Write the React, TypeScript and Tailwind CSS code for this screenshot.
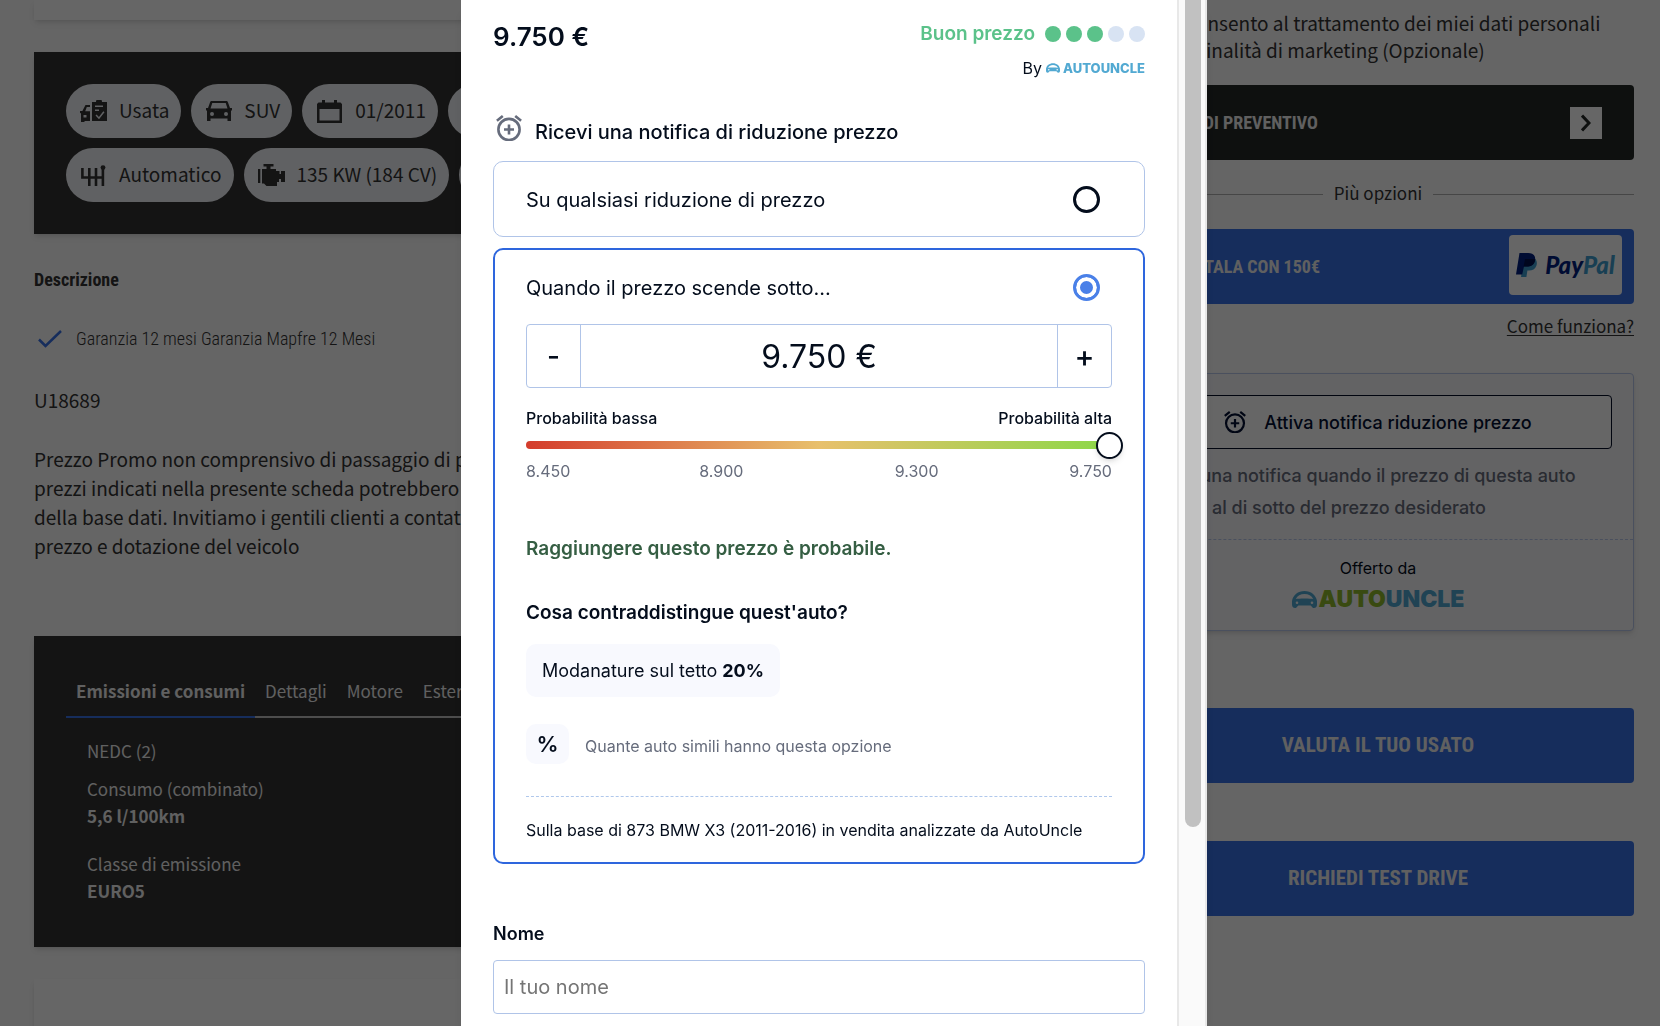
import { useState } from "react"
import type { ReactNode } from "react"

const MIN_PRICE = 8450
const MAX_PRICE = 9750
const STEP = 50

const formatPrice = (value: number) => `${Math.floor(value / 1000)}.${String(value % 1000).padStart(3, "0")}`

const sansFont = "font-['Noto_Sans_CJK_SC','Noto_Sans',sans-serif]"
const condensedFont = "font-['Roboto_Condensed','Liberation_Sans_Narrow',Roboto,sans-serif]"
const interFont = "font-['Inter',sans-serif]"

function AlarmAddIcon({ className }: { className: string }) {
  return (
    <svg viewBox="0 0 26 26" fill="none" stroke="currentColor" strokeWidth="2.6" className={className} aria-hidden="true">
      <circle cx="13" cy="14.5" r="10.6" />
      <path d="M13 9.5v10M8 14.5h10M.9 5.8L6.8 1M25.1 5.8L19.2 1" />
    </svg>
  )
}

function UsedIcon() {
  return (
    <svg viewBox="0 0 27 22" fill="currentColor" className="h-[22px] w-[27px]" aria-hidden="true">
      <path fillRule="evenodd" d="M12 2h4a3 3 0 0 1 6 0h5v19H12zM15 5.5V7h8V5.5zM15 9.5V11h4V9.5zM15.5 15.5l3.5 3.8 5.5-7-1.2-1-4.4 5.6-2.3-2.5z" />
      <path fillRule="evenodd" d="M5.5 5H10v2H6.8L5.2 11.2H10V21H4.5v1H1v-8.5L0 12.8V11h2.4zM3.5 15v2.5h3V15z" />
    </svg>
  )
}

function CarIcon() {
  return (
    <svg viewBox="0 0 26 20" fill="currentColor" className="h-5 w-[26px]" aria-hidden="true">
      <path
        fillRule="evenodd"
        d="M6 0h14c1 0 1.7.5 2 1.4L24 7h2v2.5h-1V20h-3.5v-2.5h-17V20H1V9.5H0V7h2l2-5.6C4.3.5 5 0 6 0zM6.3 2 4.5 7.5h17L19.7 2zM6 11a2 2 0 1 0 0 4 2 2 0 0 0 0-4zM20 11a2 2 0 1 0 0 4 2 2 0 0 0 0-4z"
      />
    </svg>
  )
}

function CalendarIcon() {
  return (
    <svg viewBox="0 0 25 23" fill="currentColor" className="h-[23px] w-[25px]" aria-hidden="true">
      <path fillRule="evenodd" d="M5 0h3v2.5h9V0h3v2.5h3.5L25 4v19H0V4l1.5-1.5H5zM2.5 9v11.5h20V9z" />
    </svg>
  )
}

function GearboxIcon() {
  return (
    <svg viewBox="0 0 25 21" fill="none" stroke="currentColor" strokeWidth="2.6" className="h-[21px] w-[25px]" aria-hidden="true">
      <path d="M1.4 3v9.5h20.5M8.3 3v18M15 3v18M21.9 3v18" />
      <circle cx="22" cy="2.6" r="2.4" fill="currentColor" stroke="none" />
    </svg>
  )
}

function EngineIcon() {
  return (
    <svg viewBox="0 0 27 22" fill="currentColor" className="h-[22px] w-[27px]" aria-hidden="true">
      <path d="M0 5h2.3v14H0zM5.5 0h10v2.5h-3V5H18v2h3.5v3H23V7h4v11h-4v-3h-2v3h-2v4H8.5L6 19.5H4V5h4.5V2.5h-3z" />
    </svg>
  )
}

function AutoUncleCar({ className }: { className: string }) {
  return (
    <svg viewBox="0 0 25 17" className={className} aria-hidden="true">
      <path
        fill="currentColor"
        fillRule="evenodd"
        d="M0 10C1 4 6 0 12.5 0S24 4 25 10v3.5c0 2-1 3.5-3 3.5-2.5 0-2-2.5-4-2.5H7C5 14.5 5.5 17 3 17c-2 0-3-1.5-3-3.5zM3.8 8C5.5 4.5 8.5 3 12.5 3s7 1.5 8.7 5c-2.500-.8-14.900-.8-17.400 0zM5 10.500a1.300 1.300 0 1 0 0 2.600 1.300 1.300 0 0 0 0-2.600zM20 10.500a1.300 1.300 0 1 0 0 2.600 1.300 1.300 0 0 0 0-2.600z"
      />
    </svg>
  )
}

function PayPalMark() {
  return (
    <svg viewBox="0 0 21 24" className="h-6 w-[21px]" aria-hidden="true">
      <path fill="#3f9fd0" d="M8 6h11.5c1.5 2 1.8 4.5.8 7-1.2 3-3.800 4.500-7.300 4.500h-1.600L10.400 24H5z" />
      <path fill="#001f80" d="M3.5 0h8.7C17 0 20 2.6 19 7.5c-1 4.500-4.200 6-8.500 6H8L6.200 21.500H0z" />
      <path fill="#00104d" d="M9 6h9.9c.3.5.3 1 .1 1.7-1 4.400-4.200 5.800-8.500 5.800H7.600z" />
    </svg>
  )
}

function Pill({ icon, label }: { icon: ReactNode; label: string }) {
  return (
    <li className="flex h-[54px] shrink-0 items-center gap-3 rounded-full bg-[#f0f2f7] pr-3 pl-[14px] text-[19px] leading-7 text-[#323232]">
      <span className="flex w-[27px] justify-center">{icon}</span>
      <span className="pb-[2px]">{label}</span>
    </li>
  )
}

function VehicleColumn() {
  const tabs = ["Dettagli", "Motore", "Esterni"]

  return (
    <div className={`min-w-0 flex-1 text-[#323232] ${sansFont}`}>
      <div className="h-5 bg-white shadow-md" />

      <section className="mt-8 bg-[#323232] p-8 shadow-md">
        <ul className="flex gap-[10px]">
          <Pill icon={<UsedIcon />} label="Usata" />
          <Pill icon={<CarIcon />} label="SUV" />
          <Pill icon={<CalendarIcon />} label="01/2011" />
          <li className="h-[54px] w-32 rounded-full bg-[#f0f2f7]" />
        </ul>
        <ul className="mt-[10px] flex gap-[10px]">
          <Pill icon={<GearboxIcon />} label="Automatico" />
          <Pill icon={<EngineIcon />} label="135 KW (184 CV)" />
          <li className="h-[54px] w-32 rounded-full bg-[#f0f2f7]" />
        </ul>
      </section>

      <h2 className={`mt-8 text-[18px] leading-7 font-bold ${condensedFont}`}>Descrizione</h2>
      <p className={`mt-[31px] flex items-center gap-[14px] text-[18px] leading-7 font-light ${condensedFont}`}>
        <svg viewBox="0 0 24 18" fill="none" stroke="#3770e6" strokeWidth="2.5" className="ml-1 h-[18px] w-6" aria-hidden="true">
          <path d="M1 9.5l6.5 6.5L23 1" />
        </svg>
        Garanzia 12 mesi Garanzia Mapfre 12 Mesi
      </p>
      <div className="mt-8 text-[19px] leading-[29px] whitespace-pre-line">
        <p>U18689</p>
        <p className="mt-[30px]">
          {"Prezzo Promo non comprensivo di passaggio di p\nprezzi indicati nella presente scheda potrebbero\ndella base dati. Invitiamo i gentili clienti a contat\nprezzo e dotazione del veicolo"}
        </p>
      </div>

      <section className="mt-[76px] bg-[#323232] px-8 pt-[42px] pb-[43px] text-[17px] leading-[26px] text-[#f0f0f0] shadow-md">
        <div role="tablist" className="flex items-start border-b-2 border-[#c0c0c0]">
          <button type="button" role="tab" aria-selected="true" className="-mb-[2px] border-b-2 border-[#3770e6] px-[10px] pb-3 font-bold">
            Emissioni e consumi
          </button>
          {tabs.map((tab) => (
            <button key={tab} type="button" role="tab" aria-selected="false" className="px-[10px] pb-3">
              {tab}
            </button>
          ))}
        </div>
        <div className="mt-5 pl-[21px]">
          <p>NEDC (2)</p>
          <dl>
            <dt className="mt-3">Consumo (combinato)</dt>
            <dd className="leading-[27px] font-bold">5,6 l/100km</dd>
            <dt className="mt-[22px]">Classe di emissione</dt>
            <dd className="leading-[27px] font-bold">EURO5</dd>
          </dl>
        </div>
      </section>

      <div className="mt-8 h-40 bg-white shadow-md" />
    </div>
  )
}

function OffersColumn() {
  return (
    <div className={`w-[512px] shrink-0 text-[#323232] ${sansFont}`}>
      <p className="mt-[9px] pl-11 text-[19px] leading-[27px]">
        Acconsento al trattamento dei miei dati personali
        <br />
        per finalità di marketing (Opzionale)
      </p>

      <button
        type="button"
        className={`mt-[22px] flex h-[75px] w-full items-center justify-between rounded bg-[#232826] px-8 text-[18px] font-bold text-[#f0f0f0] ${condensedFont}`}
      >
        RICHIEDI PREVENTIVO
        <span className="flex h-8 w-8 items-center justify-center bg-white text-[#232826]">
          <svg viewBox="0 0 10 18" fill="none" stroke="currentColor" strokeWidth="3" className="h-[18px] w-[10px]" aria-hidden="true">
            <path d="M1 1.5L8 9l-7 7.5" />
          </svg>
        </span>
      </button>

      <div className="mt-[19px] flex items-center gap-[11px] text-[17px] leading-7">
        <span className="h-px flex-1 bg-[#b0b0b0]" />
        <span className="pb-[2px]">Più opzioni</span>
        <span className="h-px flex-1 bg-[#b0b0b0]" />
      </div>

      <button
        type="button"
        className={`mt-5 flex h-[75px] w-full items-center justify-between rounded bg-[#3770e6] pr-3 pl-8 text-[18px] font-bold text-[#f0f0f0] ${condensedFont}`}
      >
        PRENOTALA CON 150€
        <span className="mb-1 flex h-[60px] w-[113px] items-center justify-center gap-2 rounded bg-white">
          <PayPalMark />
          <span className="font-['Lato',sans-serif] text-[24px] leading-6 font-black text-[#001f80] italic">
            Pay<span className="text-[#3f9fd0]">Pal</span>
          </span>
        </span>
      </button>
      <p className="mt-2 text-right text-[17px] leading-7">
        <a href="#come-funziona" className="underline underline-offset-2">
          Come funziona?
        </a>
      </p>

      <section className={`mt-[33px] rounded border border-[#b9c9ea] bg-[#f8f8fb] shadow-md ${interFont}`}>
        <div className="px-[21px] pt-[21px]">
          <button
            type="button"
            className="flex h-[54px] w-full items-center justify-center gap-[18px] rounded border border-[#040d26] bg-white text-[18px] font-medium text-[#041033]"
          >
            <AlarmAddIcon className="h-[22px] w-[22px]" />
            Attiva notifica riduzione prezzo
          </button>
          <p className="mt-[11px] text-[18px] leading-8 font-medium text-[#666c7c]">
            Ricevi una notifica quando il prezzo di questa auto
            <br />
            scende al di sotto del prezzo desiderato
          </p>
        </div>
        <div className="mt-[15px] flex h-[91px] flex-col items-center border-t border-dashed border-[#b9c9ea] pt-4 text-[16px] leading-6 text-[#040d1c]">
          Offerto da
          <span className="mt-2 flex h-[22px] items-center gap-[2px] text-[23px] font-black text-[#52a9d2]">
            <AutoUncleCar className="h-[17px] w-[25px]" />
            <span>
              <span className="text-[#8fba2c]">AUTO</span>UNCLE
            </span>
          </span>
        </div>
      </section>

      <button type="button" className={`mt-[77px] h-[75px] w-full rounded bg-[#3770e6] text-[21px] font-bold text-[#f0f0f0] ${condensedFont}`}>
        VALUTA IL TUO USATO
      </button>
      <button type="button" className={`mt-[58px] h-[75px] w-full rounded bg-[#3770e6] text-[21px] font-bold text-[#f0f0f0] ${condensedFont}`}>
        RICHIEDI TEST DRIVE
      </button>
    </div>
  )
}

const radioClass =
  "h-[27px] w-[27px] appearance-none rounded-full border-[3px] border-[#040d1c] bg-white checked:border-[#4a80e8] checked:bg-[#4a80e8] checked:shadow-[inset_0_0_0_4px_white]"

function PriceAlertDialog() {
  const [mode, setMode] = useState("below")
  const [price, setPrice] = useState(MAX_PRICE)

  const changePrice = (value: number) => setPrice(Math.min(MAX_PRICE, Math.max(MIN_PRICE, value)))

  return (
    <div role="dialog" aria-modal="true" aria-labelledby="alert-title" className={`flex h-full w-[746px] overflow-hidden bg-white text-[#040d1c] shadow-lg ${interFont}`}>
      <div className="min-w-0 flex-1 px-8">
        <header className="flex justify-between pt-5">
          <strong className="text-[26px] leading-[34px] font-semibold">9.750 €</strong>
          <div className="flex flex-col items-end">
            <div className="flex items-center gap-[10px] text-[19px] leading-7 font-semibold text-[#5bc28a]">
              Buon prezzo
              <span className="flex gap-[5px]">
                {[1, 2, 3, 4, 5].map((dot) => (
                  <span key={dot} className={dot <= 3 ? "h-4 w-4 rounded-full bg-[#5bc28a]" : "h-4 w-4 rounded-full bg-[#d8e3f3]"} />
                ))}
              </span>
            </div>
            <div className="mt-2 flex items-center gap-1 text-[16px] leading-6">
              By
              <span className="flex items-center gap-[3px] text-[13px] font-extrabold text-[#52a9d2]">
                <AutoUncleCar className="h-[10px] w-[14px]" />
                AUTOUNCLE
              </span>
            </div>
          </div>
        </header>

        <h1 id="alert-title" className="mt-[35px] flex items-center gap-[13px] text-[20px] leading-8 font-medium">
          <AlarmAddIcon className="mb-2 ml-[3px] h-[26px] w-[26px] text-[#666c7c]" />
          Ricevi una notifica di riduzione prezzo
        </h1>

        <label className="mt-3 flex h-[76px] items-center justify-between rounded-[10px] border border-[#b0c4e8] pr-11 pl-8 text-[20px] leading-8">
          <span className="pt-[2px]">Su qualsiasi riduzione di prezzo</span>
          <input type="radio" name="mode" className={radioClass} checked={mode === "any"} onChange={() => setMode("any")} />
        </label>

        <section className="mt-[11px] rounded-[10px] border-2 border-[#2e66dd] px-[31px] pt-5 pb-5">
          <label className="flex items-center justify-between pr-3 text-[20px] leading-8">
            <span className="pt-[2px]">Quando il prezzo scende sotto...</span>
            <input type="radio" name="mode" className={radioClass} checked={mode === "below"} onChange={() => setMode("below")} />
          </label>

          <div className="mt-5 flex h-16 rounded border border-[#b0c4e8]">
            <button type="button" aria-label="Diminuisci" className="w-[54px] border-r border-[#b0c4e8] text-[28px] font-medium" onClick={() => changePrice(price - STEP)}>
              -
            </button>
            <input aria-label="Prezzo" readOnly value={`${formatPrice(price)} €`} className="min-w-0 flex-1 pt-[2px] text-center text-[32px] outline-none" />
            <button type="button" aria-label="Aumenta" className="w-[54px] border-l border-[#b0c4e8] text-[30px] font-medium" onClick={() => changePrice(price + STEP)}>
              +
            </button>
          </div>

          <div className="mt-[18px] flex justify-between text-[16px] leading-6 font-medium">
            <span>Probabilità bassa</span>
            <span>Probabilità alta</span>
          </div>
          <div className="mt-[11px] flex h-2 items-center rounded bg-[linear-gradient(90deg,#d43c2c,#e8c06c_50%,#8cd848)]">
            <input
              type="range"
              aria-label="Prezzo desiderato"
              min={MIN_PRICE}
              max={MAX_PRICE}
              step={STEP}
              value={price}
              onChange={(e) => changePrice(Number(e.target.value))}
              className="-mx-[11px] h-7 flex-1 appearance-none bg-transparent [&::-webkit-slider-thumb]:h-[27px] [&::-webkit-slider-thumb]:w-[27px] [&::-webkit-slider-thumb]:appearance-none [&::-webkit-slider-thumb]:rounded-full [&::-webkit-slider-thumb]:border-2 [&::-webkit-slider-thumb]:border-[#040d1c] [&::-webkit-slider-thumb]:bg-white [&::-webkit-slider-thumb]:shadow-md"
            />
          </div>
          <div className="mt-[10px] flex text-[16px] leading-6 text-[#666c7c]">
            <span className="w-1/6">8.450</span>
            <span className="w-1/3 text-center">8.900</span>
            <span className="w-1/3 text-center">9.300</span>
            <span className="w-1/6 text-right">9.750</span>
          </div>

          <p className="mt-[52px] text-[19px] leading-7 font-semibold text-[#355e43]">Raggiungere questo prezzo è probabile.</p>

          <h2 className="mt-9 text-[19px] leading-7 font-semibold">Cosa contraddistingue quest'auto?</h2>
          <div className="mt-[17px] flex">
            <p className="rounded-[10px] bg-[#f8f9fe] px-4 py-3 text-[18px] leading-[29px]">
              Modanature sul tetto <b className="font-bold">20%</b>
            </p>
          </div>
          <div className="mt-[27px] flex items-center gap-4">
            <span className="flex h-10 w-[43px] items-center justify-center rounded-[10px] bg-[#f8f9fe] text-[22px] leading-8 font-semibold">%</span>
            <span className="pt-1 text-[16px] leading-6 text-[#666c7c]">Quante auto simili hanno questa opzione</span>
          </div>

          <p className="mt-8 border-t border-dashed border-[#b0c8ec] pt-[21px] text-[16px] leading-6">
            Sulla base di 873 BMW X3 (2011-2016) in vendita analizzate da AutoUncle
          </p>
        </section>

        <div className="mt-14 flex flex-col gap-3">
          <label htmlFor="nome" className="text-[18px] leading-7 font-semibold">
            Nome
          </label>
          <input id="nome" type="text" placeholder="Il tuo nome" className="h-[54px] rounded border border-[#b0c4e8] px-[10px] text-[20px] placeholder:text-[#757575]" />
        </div>
      </div>

      <div className="w-[30px] border-x-2 border-[#e8e8e8] bg-[#fafafa] pl-[6px]">
        <div className="h-[827px] w-4 rounded-b-full bg-[#c1c1c1]" />
      </div>
    </div>
  )
}

export default function App() {
  return (
    <div className="relative h-screen overflow-hidden bg-[#fcfcfc]">
      <main className="flex gap-8 pr-[26px] pl-[34px]">
        <VehicleColumn />
        <OffersColumn />
      </main>
      <div className="fixed inset-0 flex justify-center bg-black/60 pl-2">
        <PriceAlertDialog />
      </div>
    </div>
  )
}
